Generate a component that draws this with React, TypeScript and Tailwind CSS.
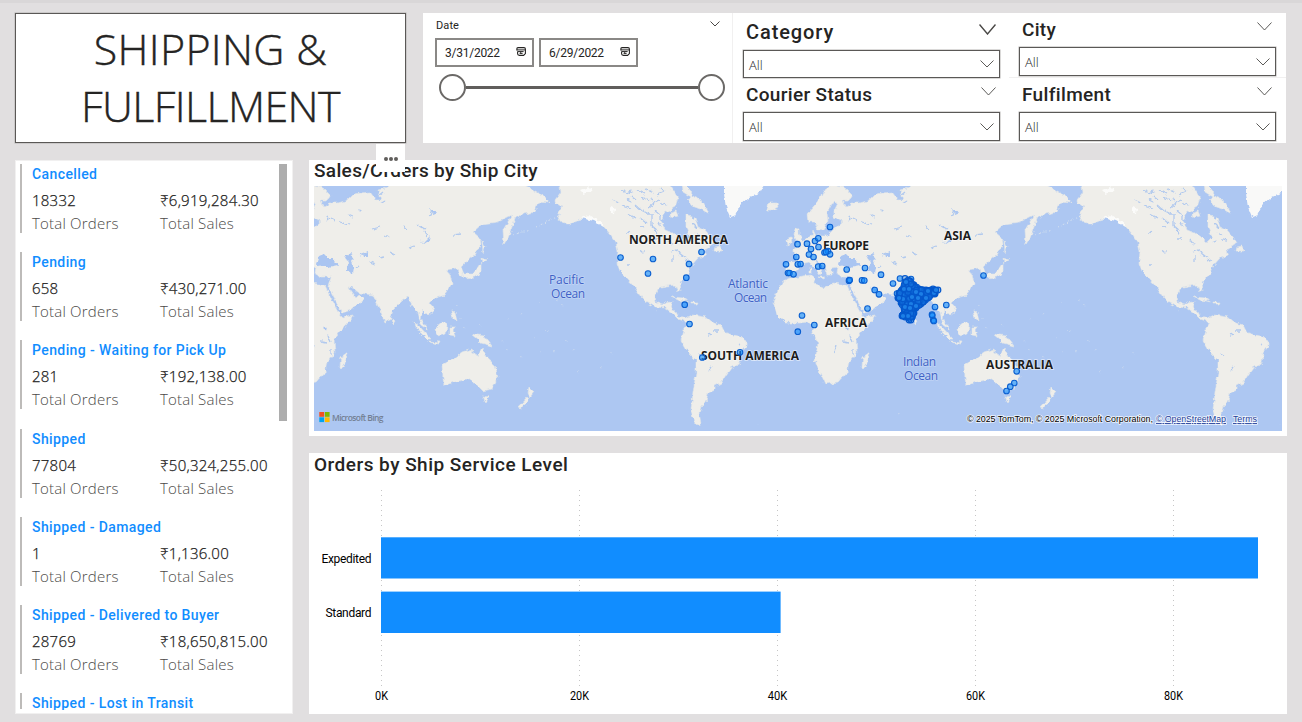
import React from "react";

const RB = "font-[Roboto,'Noto_Sans',sans-serif]";
const OS = "font-['Open_Sans','Noto_Sans',sans-serif]";

const statuses = [
  { name: "Cancelled", orders: "18332", sales: "₹6,919,284.30" },
  { name: "Pending", orders: "658", sales: "₹430,271.00" },
  { name: "Pending - Waiting for Pick Up", orders: "281", sales: "₹192,138.00" },
  { name: "Shipped", orders: "77804", sales: "₹50,324,255.00" },
  { name: "Shipped - Damaged", orders: "1", sales: "₹1,136.00" },
  { name: "Shipped - Delivered to Buyer", orders: "28769", sales: "₹18,650,815.00" },
];

function Chevron({ w, h, sw = 1, className = "" }: { w: number; h: number; sw?: number; className?: string }) {
  return (
    <svg width={w} height={h} viewBox={`0 0 ${w} ${h}`} className={`shrink-0 ${className}`}>
      <path d={`M0.5 0.5 L${w / 2} ${h - 1} L${w - 0.5} 0.5`} fill="none" stroke="#4a4846" strokeWidth={sw} />
    </svg>
  );
}

function CalendarIcon() {
  return (
    <svg width="10" height="9" viewBox="0 0 10 9" className="mb-[2px]">
      <path d="M2 0.6H8Q9.4 0.6 9.4 2V6.6L7.6 8.4H3.4Q1.6 8.4 1.6 6.8V4.4M0.9 3.4V1.8Q0.9 0.6 2 0.6" fill="none" stroke="#252423" strokeWidth="1.1" />
      <path d="M0.8 2.9H9.2M1.6 4.6H7.6M3.6 6.4H6.6M4.2 5.4H5.2" stroke="#252423" strokeWidth="1" />
    </svg>
  );
}

function DateBox({ value }: { value: string }) {
  return (
    <div className="flex h-[29px] w-[99px] items-center justify-between border-2 border-[#8a8886] pr-[6px] pl-[8px]">
      <span className={`${RB} text-[12px] tracking-[-0.25px] text-[#252423]`}>{value}</span>
      <CalendarIcon />
    </div>
  );
}

function Slicer({ label, text, className, head, box, bold = false }: { label: string; text: string; className: string; head: string; box: string; bold?: boolean }) {
  return (
    <div className={`flex flex-col ${className}`}>
      <div className={`flex shrink-0 justify-between pr-[4px] pl-[3px] ${head}`}>
        <span className={`${RB} leading-[24px] font-[460] whitespace-nowrap text-[#252423] ${text}`}>{label}</span>
        <Chevron w={bold ? 17 : 15} h={bold ? 11 : 9} sw={bold ? 1.4 : 0.9} className="mt-[4px]" />
      </div>
      <div className={`flex shrink-0 items-center justify-between border border-[#5a5856] pr-[5px] pl-[5px] shadow-[0_0_0_0.5px_#b5b3b1] ${box}`}>
        <span className={`${OS} pt-[3px] text-[13px] font-light text-[#252423]`}>All</span>
        <Chevron w={14} h={8} sw={0.9} />
      </div>
    </div>
  );
}

const americas =
  "M559 182 L561 192 L555 200 L556 204 L563 206 L557 215 L560 221 L568 225 L575 222 L585 217 L595 220 L605 228 L611 235 L616 243 L618 251 L617 263 L620 271 L628 280 L635 288 L641 297 L646 302 L656 307 L665 308 L671 312 L678 319 L684 321 L687 323 L683 330 L681 340 L688 352 L696 360 L696 373 L693 393 L691 410 L694 422 L701 425 L699 413 L701 407 L706 402 L708 393 L715 390 L715 386 L721 383 L726 375 L731 368 L740 363 L741 353 L746 347 L746 341 L738 336 L725 333 L721 325 L711 322 L705 317 L692 315 L686 318 L678 316 L675 310 L670 308 L672 301 L665 302 L663 305 L656 302 L655 295 L658 288 L666 286 L675 285 L678 292 L681 291 L680 283 L688 273 L690 267 L698 258 L706 255 L705 250 L715 243 L711 237 L705 230 L698 227 L695 218 L686 215 L686 227 L690 237 L685 242 L678 235 L665 230 L661 220 L665 213 L675 207 L678 198 L668 182 Z";
const baffin = "M682 182 L690 190 L694 197 L703 201 L708 214 L700 209 L692 206 L687 200 L691 197 L683 192 Z M670 214 L676 211 L678 216 L671 218 Z M715 247 L720 246 L722 251 L714 251 Z";
const eurasia =
  "M808 222 L807 214 L814 206 L820 198 L826 189 L833 184 L845 187 L853 195 L849 200 L842 200 L846 207 L852 203 L860 203 L870 200 L876 194 L883 193 L892 192 L898 200 L903 200 L900 190 L908 188 L918 182 L1040 182 L1054 189 L1067 197 L1072 203 L1060 202 L1057 212 L1046 214 L1037 218 L1034 228 L1030 238 L1026 244 L1025 230 L1034 215 L1020 222 L1004 224 L995 232 L1002 238 L1003 244 L997 254 L983 267 L986 274 L982 276 L978 268 L968 270 L972 275 L974 283 L967 295 L957 298 L952 303 L956 311 L950 316 L944 310 L943 320 L950 330 L943 325 L940 312 L934 306 L930 297 L925 300 L915 310 L912 320 L907 322 L902 310 L898 302 L895 295 L882 293 L873 287 L870 287 L877 297 L882 295 L886 299 L873 310 L864 313 L857 300 L850 287 L853 277 L842 277 L837 274 L838 267 L832 268 L832 275 L827 275 L825 268 L819 261 L815 260 L822 270 L820 275 L815 268 L809 262 L805 263 L798 267 L795 273 L790 277 L785 275 L787 262 L797 262 L797 257 L792 250 L798 247 L805 240 L812 236 L813 230 L816 236 L827 236 L833 230 L842 222 L834 218 L834 211 L838 203 L833 202 L827 213 L828 221 L823 229 L818 230 L815 222 Z";
const africa =
  "M790 279 L803 276 L813 275 L815 283 L825 288 L833 283 L847 285 L852 297 L860 312 L864 317 L875 315 L870 323 L862 332 L856 340 L857 353 L849 362 L847 372 L838 382 L825 384 L820 373 L815 360 L818 343 L812 332 L813 326 L807 322 L800 323 L785 323 L777 315 L773 303 L775 295 L783 282 Z";
const australia =
  "M964 365 L977 358 L985 352 L994 349 L996 355 L1000 357 L1004 347 L1009 358 L1017 365 L1020 377 L1014 389 L1005 391 L999 385 L989 379 L977 382 L966 385 L965 377 Z";
const islands =
  "M795 228 L799 229 L799 234 L803 240 L805 245 L795 249 L797 242 L794 235 Z M786 240 L791 238 L792 243 L787 246 Z M766 206 L769 203 L777 203 L778 207 L772 210 L768 210 Z M862 367 L863 357 L870 352 L867 363 L864 369 Z M914 318 L917 321 L915 324 Z M936 322 L942 327 L953 339 L949 339 L941 331 Z M950 341 L962 342 L961 344 L950 342 Z M957 329 L966 321 L969 325 L968 333 L959 335 Z M972 327 L978 327 L975 331 L977 336 L972 335 Z M993 334 L1006 336 L1014 346 L1003 343 L999 339 Z M984 274 L995 274 L1000 267 L1003 262 L1003 271 L998 277 L986 278 Z M1003 258 L1009 260 L1004 263 Z M1004 240 L1007 247 L1005 253 Z M1004 396 L1011 397 L1008 402 Z M1040 407 L1049 397 L1051 399 L1044 408 Z M1051 387 L1056 392 L1052 397 L1050 393 Z M973 310 L977 313 L979 321 L975 318 Z M672 297 L683 298 L690 302 L678 300 Z M692 302 L698 302 L697 304 L692 304 Z M818 277 L824 277 L823 279 Z M809 268 L811 268 L811 273 L809 273 Z";
const inlandSeas =
  "M838 264 L841 256 L846 254 L850 258 L855 258 L860 265 L850 267 L842 267 Z M867 257 L872 253 L876 256 L873 261 L876 268 L875 274 L869 271 L870 264 Z M885 254 L889 252 L890 257 L886 257 Z M846 326 L849 327 L848 331 L845 329 Z M942 240 L946 243 L953 236 L952 240 L946 244 Z M952 209 L960 212 L955 214 Z";
const fineWater =
  "M671 252l5 -2l4 3M673 255v7M679 253l4 3l3 2M684 261l5 -2M655 239h5M627 233l3 -1M640 252l5 -1M628 265l2 0M621 190l6 3l5 -2M637 190l8 4M642 197l6 3M612 200l7 3M622 206l9 3M635 205l6 5M641 210l8 4M628 214l8 4M640 218l6 5M648 208l6 -5M652 217v9M645 189l9 4M657 195l7 -3M661 203l6 2M654 229l4 4M848 220l3 -3M853 218l4 2M862 222l9 3M895 229l7 -2M907 235l4 3M882 255l5 -2M892 262l5 2M878 268l3 -2M901 258l6 -1M911 252l6 3M931 248l5 -2M940 225l7 4M946 231l3 6M926 226l3 4M951 216l3 -6M853 349v6M850 335l3 7M713 331l5 0M708 335l4 -1M698 354l4 2M711 367l-3 4M738 344l2 1M843 341l5 1M836 345l-2 7M975 235l8 -1M870 215l5 2M880 212l3 -3M897 190l4 6l5 -4M902 203l5 -3M647 214h5v6M655 211l5 4v5M650 199l5 3l4 -2M632 197l4 3M660 188l5 3M627 199l4 2M652 226l4 3M658 222l3 5M693 224l4 4M696 233l5 2M700 239l5 1M691 243l4 -2M668 240l4 5M640 226l4 2";
const ice = "M724 182 L724 193 L726 207 L730 217 L735 215 L740 205 L748 198 L759 193 L766 182 Z";
const snow = "M580 190 L588 187 L592 191 L584 194 Z M611 206 L615 208 L614 215 L611 213 Z M581 218 L588 215 L600 221 L604 227 L594 221 Z";
const atolls: [number, number][] = [
  [978, 305], [981, 318], [985, 327], [1002, 325], [1030, 318], [1043, 313], [1060, 301], [1084, 305], [1068, 330], [1055, 337], [1088, 341], [1076, 350],
  [1061, 351], [1095, 349], [1099, 371], [1122, 367], [1132, 352], [1042, 356], [1023, 340], [1029, 349], [898, 413], [655, 310], [757, 424], [1078, 299],
];

function World() {
  return (
    <g id="world" filter="url(#coast)">
      <path d={[americas, baffin, eurasia, africa, australia, islands].join(" ")} fill="#efeeea" stroke="#e3e5e6" strokeWidth="0.6" />
      <path d={ice} fill="#f9f9f8" />
      <path d={snow} fill="#fbfbfa" />
      <path d={inlandSeas} fill="#aac5f1" />
      <path d={fineWater} fill="none" stroke="#b1c9ee" strokeWidth="1.3" />
      <path d="M1034 235L1053 230M1058 227L1085 214M569 224L582 218" stroke="#d3dfef" strokeWidth="1" strokeDasharray="2 3" />
      {atolls.map(([x, y], i) => (
        <rect key={i} x={x} y={y} width="1.6" height="1.2" fill="#c0d3f0" />
      ))}
    </g>
  );
}

const pins: [number, number][] = [
  [620.5, 257.5], [653, 259], [648, 273.5], [701.5, 252], [689, 264], [686.3, 277.7], [684.7, 304.7], [689.5, 324], [702.3, 357.5], [740, 352.3],
  [797.5, 244.2], [807, 243.7], [815, 241], [818.3, 238.3], [830, 227], [811, 249], [818.5, 247], [809, 254.5], [813.5, 257], [796.3, 257], [786, 264.3],
  [797.8, 264.3], [800.5, 264], [788, 273], [789.5, 273], [793.5, 274.3], [818.2, 266.5], [822.2, 266], [824.5, 252.5], [828, 251], [830, 254.3], [826, 252],
  [846.7, 269.5], [865, 268], [849, 280.7], [849.7, 280], [862, 280.3], [864.3, 280.5], [881, 274.7], [893, 283.5], [874.7, 290], [879, 294.3], [867.5, 308.5],
  [802, 315.5], [814.3, 325], [797.8, 331.7], [900, 278.5], [911, 279], [897, 293.5], [983.5, 275.5], [935, 307], [946.3, 305], [932, 314.5], [932.3, 315.5],
  [933.3, 320], [933.8, 321], [1016.7, 371.3], [1014.3, 383], [1010.3, 386.7], [1006.5, 391],
];

const india: [number, number][] = [
  [905, 278.5], [910, 281], [914, 285], [919, 289], [926, 290], [933, 289], [938, 290], [935, 294], [928, 298], [921, 304], [916, 308], [914, 313],
  [911, 320], [909, 320], [905, 317], [902, 316], [905, 311], [901, 303], [898, 298], [899, 293], [904, 286],
];

function inside(x: number, y: number) {
  let hit = false;
  for (let i = 0, j = india.length - 1; i < india.length; j = i++) {
    const [xi, yi] = india[i];
    const [xj, yj] = india[j];
    if (yi > y !== yj > y && x < ((xj - xi) * (y - yi)) / (yj - yi) + xi) hit = !hit;
  }
  return hit;
}

const cluster: [number, number][] = [...india];
let seed = 7;
const rand = () => (seed = (seed * 16807) % 2147483647) / 2147483647;
while (cluster.length < 380) {
  const x = 895 + rand() * 46;
  const y = 276 + rand() * 46;
  if (inside(x, y)) cluster.push([x, y]);
}
const accents: [number, number][] = [
  [906, 282], [904, 289], [909, 289], [916, 292], [921, 294], [928, 291], [934, 293], [903, 299], [911, 304], [918, 298], [926, 298], [905, 307],
  [910, 308], [908, 316], [903, 316], [899, 298], [936, 290], [916, 306], [912, 297],
];

function MapLabel({ x, y, w, children }: { x: number; y: number; w: number; children: string }) {
  return (
    <text x={x} y={y} textLength={w} className="font-['Open_Sans',sans-serif] text-[12px] font-bold" fill="#1d1d1d" stroke="#fff" strokeOpacity="0.6" strokeWidth="1.5" paintOrder="stroke">
      {children}
    </text>
  );
}

function OceanLabel({ x, y, w, children }: { x: number; y: number; w: number; children: string }) {
  return (
    <text x={x} y={y} textLength={w} className="font-['Open_Sans',sans-serif] text-[12px]" fill="#3f62c6" stroke="#c9daf6" strokeOpacity="0.7" strokeWidth="1.5" paintOrder="stroke">
      {children}
    </text>
  );
}

function ShipMap() {
  return (
    <svg width="968" height="245" viewBox="314 186 968 245" className="ml-[5px] block">
      <defs>
        <filter id="coast" filterUnits="userSpaceOnUse" x="540" y="180" width="620" height="260">
          <feTurbulence type="fractalNoise" baseFrequency="0.22" numOctaves="2" seed="4" result="n" />
          <feDisplacementMap in="SourceGraphic" in2="n" scale="5" xChannelSelector="R" yChannelSelector="G" />
        </filter>
      </defs>
      <rect x="314" y="186" width="968" height="245" fill="#adc7f2" />
      <World />
      <use href="#world" x="-522" />
      <use href="#world" x="522" />
      <MapLabel x={629} y={244} w={99}>NORTH AMERICA</MapLabel>
      <MapLabel x={701} y={360} w={98}>SOUTH AMERICA</MapLabel>
      <MapLabel x={823} y={250} w={46}>EUROPE</MapLabel>
      <MapLabel x={825} y={327} w={42}>AFRICA</MapLabel>
      <MapLabel x={944} y={240} w={27}>ASIA</MapLabel>
      <MapLabel x={986} y={369} w={67}>AUSTRALIA</MapLabel>
      <OceanLabel x={549} y={284} w={35}>Pacific</OceanLabel>
      <OceanLabel x={551} y={298} w={34}>Ocean</OceanLabel>
      <OceanLabel x={728} y={288} w={40}>Atlantic</OceanLabel>
      <OceanLabel x={734} y={302} w={33}>Ocean</OceanLabel>
      <OceanLabel x={903} y={366} w={33}>Indian</OceanLabel>
      <OceanLabel x={904} y={380} w={34}>Ocean</OceanLabel>
      <g fill="#118dff" fillOpacity="0.62" stroke="#0a5fd0" strokeWidth="1.1">
        {pins.map(([x, y], i) => (
          <circle key={i} cx={x} cy={y} r="2.8" />
        ))}
      </g>
      <g fill="#1c7fe6" stroke="#0558cc" strokeWidth="1.2">
        {cluster.map(([x, y], i) => (
          <circle key={i} cx={x} cy={y} r="2.8" fillOpacity="0.35" />
        ))}
        {accents.map(([x, y], i) => (
          <circle key={i} cx={x} cy={y} r="2.7" />
        ))}
      </g>
      <rect x="319.3" y="412" width="4.8" height="4.8" fill="#f25022" />
      <rect x="324.8" y="412" width="4.8" height="4.8" fill="#7fba00" />
      <rect x="319.3" y="417.3" width="4.8" height="4.8" fill="#00a4ef" />
      <rect x="324.8" y="417.3" width="4.8" height="4.8" fill="#ffb900" />
      <text x="332" y="420.5" textLength="51.5" className="font-['Open_Sans',sans-serif] text-[8.5px] font-semibold" fill="#737f92">Microsoft Bing</text>
      <g className="font-['Liberation_Sans',Arial,sans-serif] text-[9px]" stroke="#fff" strokeWidth="1.6" strokeOpacity="0.8" paintOrder="stroke">
        <text x="967" y="422" textLength="186" fill="#000">© 2025 TomTom, © 2025 Microsoft Corporation,</text>
        <text x="1156" y="422" textLength="70" fill="#23409a" textDecoration="underline">© OpenStreetMap</text>
        <text x="1233" y="422" textLength="24" fill="#23409a" textDecoration="underline">Terms</text>
      </g>
    </svg>
  );
}

const ticks = [
  { x: 381.5, label: "0K", w: 13 },
  { x: 579.5, label: "20K", w: 19 },
  { x: 777.5, label: "40K", w: 19.5 },
  { x: 975.5, label: "60K", w: 19 },
  { x: 1173.5, label: "80K", w: 19 },
];

function ServiceChart() {
  return (
    <svg width="978" height="237" viewBox="309 477 978 237" className="block">
      {ticks.map((t) => (
        <g key={t.label}>
          <line x1={t.x} x2={t.x} y1="490" y2="686" stroke="#c6c6c6" strokeWidth="1" strokeDasharray="1 4" />
          <text x={t.x} y="700" textAnchor="middle" textLength={t.w} lengthAdjust="spacingAndGlyphs" className="font-[Roboto,sans-serif] text-[12px]" fill="#000">{t.label}</text>
        </g>
      ))}
      <rect x="381" y="537.3" width="877" height="41.2" fill="#118dff" />
      <rect x="381" y="591.6" width="399.6" height="41.4" fill="#118dff" />
      <text x="321.5" y="563" textLength="50" className="font-[Roboto,sans-serif] text-[12px]" fill="#000">Expedited</text>
      <text x="325.5" y="617" textLength="46" className="font-[Roboto,sans-serif] text-[12px]" fill="#000">Standard</text>
    </svg>
  );
}

export default function App() {
  return (
    <div className="h-[722px] w-[1302px] overflow-hidden bg-[#e1dfe0]">
      <div className="h-[3px] bg-[#d9d7d8]" />
      <div className="flex h-[719px] flex-col gap-[17px] pt-[10px] pl-[15px]">
        <div className="flex h-[130px] shrink-0 gap-[17px]">
          <div className="flex w-[391px] items-center justify-center border border-[#5a5856] bg-white pb-[2px] text-center shadow-[0_0_0_0.5px_#b5b3b1]">
            <h1 className={`${OS} text-[43px] leading-[57px] font-light text-[#252423] [-webkit-text-stroke:0.4px_#252423]`}>
              <span className="block tracking-[0.3px]">SHIPPING &amp;</span>
              <span className="block tracking-[-0.6px]">FULFILLMENT</span>
            </h1>
          </div>

          <div className="flex bg-white">
            <div className="flex w-[310px] flex-col border-r border-[#f1f0f0] pt-[5px] pl-[12px]">
              <div className="flex h-[20px] justify-between pr-[12px] pl-[1px]">
                <span className={`${RB} text-[11px] leading-[15px] tracking-[0.1px] text-[#252423]`}>Date</span>
                <Chevron w={10} h={6} className="mt-[3px]" />
              </div>
              <div className="flex gap-[5px]">
                <DateBox value="3/31/2022" />
                <DateBox value="6/29/2022" />
              </div>
              <div className="mt-[7px] ml-[4px] flex items-center">
                <div className="size-[27px] rounded-full border-2 border-[#6b6967]" />
                <div className="h-[3px] w-[232px] bg-[#605e5c]" />
                <div className="size-[27px] rounded-full border-2 border-[#6b6967]" />
              </div>
            </div>
            <div className="grid w-[553px] grid-cols-[276px_277px] grid-rows-[65px_65px]">
              <Slicer label="Category" text="text-[20px] tracking-[0.9px]" bold className="pr-[9px] pl-[10px]" head="h-[37px] pt-[7px]" box="h-[28px]" />
              <Slicer label="City" text="text-[19px] tracking-[0.3px]" className="border-b border-[#f1f0f0] pr-[10px] pl-[10px]" head="h-[34px] pt-[5px]" box="h-[29px]" />
              <Slicer label="Courier Status" text="text-[19px] tracking-[0.33px]" className="pr-[9px] pl-[10px]" head="h-[34px] pt-[5px]" box="h-[29px]" />
              <Slicer label="Fulfilment" text="text-[19px] tracking-[0.35px]" className="pr-[10px] pl-[10px]" head="h-[34px] pt-[5px]" box="h-[29px]" />
            </div>
          </div>
        </div>

        <div className="flex h-[554px] shrink-0 gap-[16px]">
          <div className="flex w-[278px] justify-between border border-[#f1f0f0] bg-white py-[3px] pr-[5px] pl-[4px]">
            <div className="flex h-[546px] flex-col gap-[19.2px] overflow-hidden">
              {statuses.map((s) => (
                <div key={s.name} className="flex h-[69px] w-[256px] shrink-0 flex-col border-l-2 border-[#bdbbb9] pl-[10px]">
                  <div className={`${RB} h-[27px] text-[14px] leading-[20px] font-[470] tracking-[0.4px] whitespace-nowrap text-[#118dff]`}>{s.name}</div>
                  <div className={`${OS} grid h-[23px] grid-cols-[128px_1fr] text-[15px] leading-[19px] font-light tracking-[0.25px] text-[#161514] [-webkit-text-stroke:0.25px_#252423]`}>
                    <span>{s.orders}</span>
                    <span>{s.sales}</span>
                  </div>
                  <div className={`${OS} grid grid-cols-[128px_1fr] text-[15px] leading-[19px] font-light tracking-[0.2px] text-[#4c4a48]`}>
                    <span>Total Orders</span>
                    <span>Total Sales</span>
                  </div>
                </div>
              ))}
              <div className="h-[16px] w-[256px] shrink-0 border-l-2 border-[#bdbbb9] pl-[10px]">
                <div className={`${RB} text-[14px] leading-[20px] font-[470] tracking-[0.4px] whitespace-nowrap text-[#118dff]`}>Shipped - Lost in Transit</div>
              </div>
            </div>
            <div className="h-[257px] w-[8px] bg-[#adadad]" />
          </div>

          <div className="flex w-[978px] flex-col gap-[17px]">
            <div className="relative h-[276px] bg-white">
              <h2 className={`${RB} h-[26px] pl-[5px] text-[19px] leading-[22px] font-[460] tracking-[0.34px] text-[#252423]`}>Sales/Orders by Ship City</h2>
              <ShipMap />
              <div className="absolute top-[-16px] left-[67px] flex h-[28px] w-[29px] justify-center gap-[1px] bg-white pt-[13px]">
                <span className="size-[4px] rounded-full bg-[#605e5c]" />
                <span className="size-[4px] rounded-full bg-[#605e5c]" />
                <span className="size-[4px] rounded-full bg-[#605e5c]" />
              </div>
            </div>
            <div className="h-[261px] bg-white">
              <h2 className={`${RB} h-[24px] pl-[5px] text-[19px] leading-[23px] font-[460] tracking-[0.48px] text-[#252423]`}>Orders by Ship Service Level</h2>
              <ServiceChart />
            </div>
          </div>
        </div>
      </div>
    </div>
  );
}
